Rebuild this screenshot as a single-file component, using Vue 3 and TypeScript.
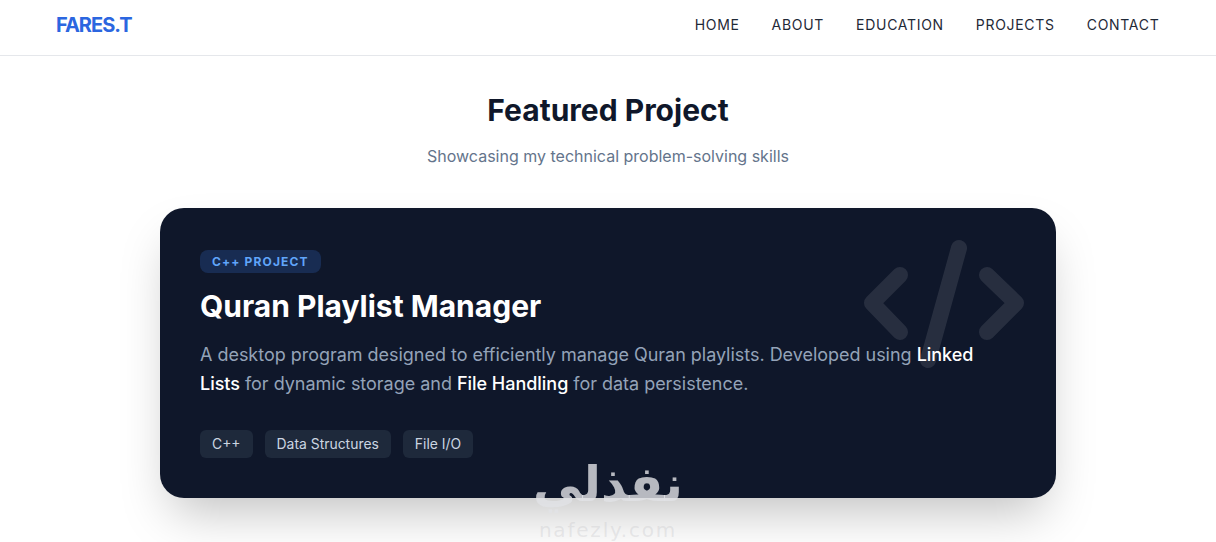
<script setup lang="ts">
const links = ['Home', 'About', 'Education', 'Projects', 'Contact']
const tags = ['C++', 'Data Structures', 'File I/O']
</script>

<template>
  <div class="page">
    <header class="navbar">
      <a class="logo">FARES.T</a>
      <nav class="links">
        <a v-for="link in links" :key="link">{{ link }}</a>
      </nav>
    </header>

    <section class="projects">
      <h2>Featured Project</h2>
      <p class="subtitle">Showcasing my technical problem-solving skills</p>

      <article class="card">
        <svg class="code-icon" viewBox="0 0 180 140" fill="none">
          <path d="M37 11 L9 39 L37 68" />
          <path d="M124 11 L153 39 L124 68" />
          <path d="M96 -16 L65 96" />
        </svg>
        <span class="badge">C++ Project</span>
        <h3>Quran Playlist Manager</h3>
        <p class="desc">
          A desktop program designed to efficiently manage Quran playlists. Developed using
          <strong>Linked Lists</strong> for dynamic storage and <strong>File Handling</strong>
          for data persistence.
        </p>
        <div class="tags">
          <span v-for="tag in tags" :key="tag" class="tag">{{ tag }}</span>
        </div>
      </article>
    </section>

    <div class="watermark">
      <span class="wm-ar" lang="ar" dir="rtl">نفذلي</span>
      <span class="wm-en">nafezly.com</span>
    </div>
  </div>
</template>

<style>
html, body { background: #fff; overflow: hidden; }
</style>

<style scoped>
.page {
  position: relative;
  height: 542px;
  overflow: hidden;
  background: #fff;
  font-family: Inter, "Liberation Sans", sans-serif;
}

.navbar {
  box-sizing: content-box;
  height: 49px;
  border-bottom: 1px solid #e5e7eb;
  padding: 0 56.6px 6px 56px;
  display: flex;
  align-items: center;
  justify-content: space-between;
}

.logo {
  font-size: 20px;
  font-weight: 700;
  letter-spacing: -1px;
  color: #2b66e0;
}

.links { display: flex; gap: 32px; }
.links a {
  font-size: 14px;
  font-weight: 400;
  letter-spacing: 0.7px;
  text-transform: uppercase;
  color: #1f2937;
}

.projects {
  display: flex;
  flex-direction: column;
  align-items: center;
  padding-top: 35px;
}

h2 {
  margin: 0;
  font-size: 30px;
  line-height: 38px;
  font-weight: 700;
  color: #0f172a;
}

.subtitle {
  margin: 15px 0 0;
  font-size: 16px;
  line-height: 24px;
  color: #64748b;
}

.card {
  position: relative;
  box-sizing: border-box;
  width: 896px;
  height: 290px;
  margin-top: 40px;
  padding: 42px 40px 0;
  background: #0f172a;
  border-radius: 24px;
  box-shadow: 0 25px 50px -12px rgba(0, 0, 0, 0.25);
}

.code-icon {
  position: absolute;
  left: 703px;
  top: 40px;
  width: 180px;
  height: 140px;
  overflow: visible;
  stroke: rgba(255, 255, 255, 0.1);
  stroke-width: 16;
  stroke-linecap: round;
  stroke-linejoin: round;
  transform: translateY(16px);
}

.badge {
  display: inline-block;
  padding: 0 12px;
  height: 23px;
  line-height: 23px;
  border-radius: 8px;
  background: rgba(59, 130, 246, 0.2);
  color: #60a5fa;
  font-size: 12px;
  font-weight: 700;
  letter-spacing: 1.15px;
  text-transform: uppercase;
}

h3 {
  margin: 12px 0 0;
  font-size: 30px;
  line-height: 42px;
  font-weight: 700;
  color: #fff;
}

.desc {
  position: relative;
  margin: 13px 0 0;
  font-size: 18px;
  letter-spacing: -0.025px;
  line-height: 29px;
  color: #94a3b8;
}
.desc strong { font-weight: 500; color: #fff; }

.tags { display: flex; gap: 12px; margin-top: 32px; }
.tag {
  padding: 0 12px;
  height: 28px;
  line-height: 28px;
  border-radius: 6px;
  background: #1e293b;
  color: #cbd5e1;
  font-size: 13.92px;
}

.watermark {
  position: absolute;
  left: 508px;
  top: 455px;
  width: 200px;
  display: flex;
  flex-direction: column;
  align-items: center;
  pointer-events: none;
}
.wm-ar {
  font-family: "DejaVu Sans", sans-serif;
  font-size: 49px;
  line-height: 60px;
  font-weight: 700;
  color: rgba(225, 226, 230, 0.8);
}
.wm-en {
  margin-top: 4px;
  font-family: "DejaVu Sans", sans-serif;
  font-size: 20px;
  line-height: 22px;
  font-weight: 400;
  letter-spacing: 1.8px;
  color: rgba(190, 190, 195, 0.3);
}
</style>
